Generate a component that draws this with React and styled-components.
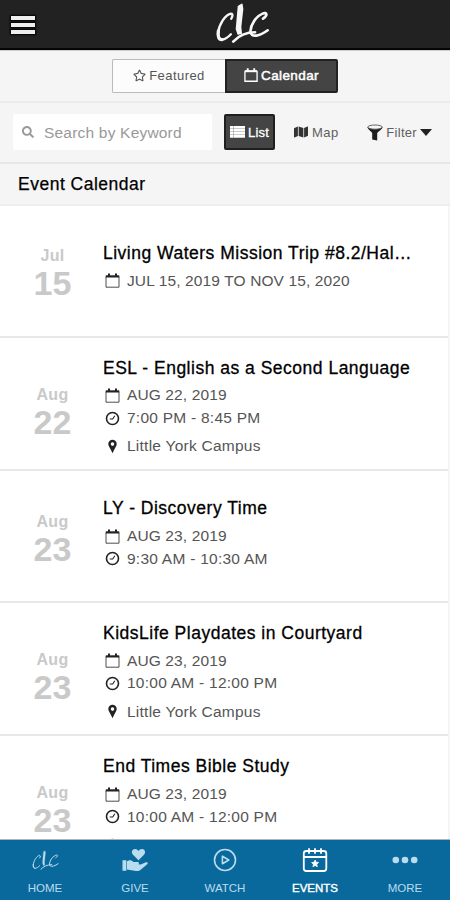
import React from 'react';
import styled, { createGlobalStyle, css } from 'styled-components';
import { FaMap, FaRegStar, FaSearch } from 'react-icons/fa';

const events = [
  {
    month: 'Jul',
    day: '15',
    title: 'Living Waters Mission Trip #8.2/Hal…',
    date: 'JUL 15, 2019 TO NOV 15, 2020',
  },
  {
    month: 'Aug',
    day: '22',
    title: 'ESL - English as a Second Language',
    date: 'AUG 22, 2019',
    time: '7:00 PM - 8:45 PM',
    place: 'Little York Campus',
  },
  {
    month: 'Aug',
    day: '23',
    title: 'LY - Discovery Time',
    date: 'AUG 23, 2019',
    time: '9:30 AM - 10:30 AM',
  },
  {
    month: 'Aug',
    day: '23',
    title: 'KidsLife Playdates in Courtyard',
    date: 'AUG 23, 2019',
    time: '10:00 AM - 12:00 PM',
    place: 'Little York Campus',
  },
  {
    month: 'Aug',
    day: '23',
    title: 'End Times Bible Study',
    date: 'AUG 23, 2019',
    time: '10:00 AM - 12:00 PM',
    place: 'Little York Campus',
  },
];

function Logo({ width, height, thin }) {
  return (
    <svg width={width} height={height} viewBox="0 0 160 120" fill="none" stroke="currentColor" strokeLinecap="round" strokeLinejoin="round">
      <path d="M46 47Q54 32 45 32C28 34 8 66 6 92C6 119 28 112 45 94" strokeWidth={thin ? 6 : 7} />
      <path d="M7 85Q4 111 18 110" strokeWidth={thin ? 6 : 10} />
      <path d="M68 10L78 4L80 18L74 72L76 91L67 93L62 78Z" fill="currentColor" strokeWidth={thin ? 1 : 5} />
      <path d="M52 116C68 99 88 88 118 88" strokeWidth={thin ? 6 : 8} />
      <path d="M142 47C158 36 153 27 142 31C120 40 105 65 104 84C104 108 134 98 156 82" strokeWidth={thin ? 6 : 8} />
    </svg>
  );
}

function CalendarIcon({ size = 15, bold }) {
  return (
    <svg width={size} height={size} viewBox="0 0 15 15" fill="none" stroke="currentColor">
      <path d="M1 3.5v10.7h13V3.5" strokeWidth={bold ? 1.4 : 0.8} />
      <path d="M.8 2.3h13.4v2.2H.8z" fill="currentColor" stroke="none" />
      <path d="M4 .4v3M11 .4v3" strokeWidth="2" />
    </svg>
  );
}

function ClockIcon() {
  return (
    <svg width="15" height="15" viewBox="0 0 15 15" fill="none" stroke="currentColor">
      <circle cx="7.5" cy="7.5" r="6" strokeWidth="1.6" />
      <path d="M4.7 8h3L9.8 4.8" strokeWidth="1.1" />
    </svg>
  );
}

function PinIcon() {
  return (
    <svg width="15" height="15" viewBox="0 0 15 15">
      <path
        d="M7.5.8a4.2 4.2 0 0 1 4.2 4.2c0 1.6-1 2.6-2.4 5.6L7.5 14.2l-1.8-3.6C4.3 7.6 3.3 6.6 3.3 5A4.2 4.2 0 0 1 7.5.8zm0 2.5a1.8 1.8 0 1 0 0 3.6 1.8 1.8 0 0 0 0-3.6z"
        fill="currentColor"
        fillRule="evenodd"
      />
    </svg>
  );
}

function GiveIcon() {
  return (
    <svg width="26" height="24" viewBox="0 0 26 24" fill="currentColor">
      <path d="M16.5 12.3L11 6.8C8.8 4.4 10.2 1 13 1c1.6 0 2.7.8 3.5 2 .8-1.2 1.9-2 3.5-2 2.8 0 4.2 3.4 2 5.8z" />
      <path d="M.5 12.2h3.9v10.6H.5zM5 13.2c2.7-1.4 4.5-1 6.5.7h3.7c2 0 2.2 1.6 1 2.4l2.6.2 5-2.2c1.7-.7 2.6 1 1.4 2l-6.2 5.2c-1.5 1.3-3.1 1.7-5 1.5L5 21.6z" />
    </svg>
  );
}

function TabCalendarIcon() {
  return (
    <svg width="26" height="26" viewBox="0 0 26 26" fill="none" stroke="currentColor" strokeWidth="1.8">
      <rect x="1.8" y="4" width="22.5" height="20" rx="2.5" />
      <path d="M1.8 10h22.5M7 1.2v5.5M13 1.2v5.5M19 1.2v5.5" />
      <path
        d="M13.1 13l1 2.3 2.5.2-1.9 1.7.6 2.5-2.2-1.3-2.2 1.3.6-2.5-1.9-1.7 2.5-.2z"
        fill="currentColor"
        strokeWidth=".8"
      />
    </svg>
  );
}

function ListIcon() {
  return (
    <svg width="15" height="12" viewBox="0 0 15 12" fill="currentColor">
      <path d="M0 0h15v12H0z" opacity=".45" />
      <path d="M0 0h3v2.4H0zM3.6 0H15v2.4H3.6zM0 3h3v2.4H0zM3.6 3H15v2.4H3.6zM0 6h3v2.4H0zM3.6 6H15v2.4H3.6zM0 9h3v2.6H0zM3.6 9H15v2.6H3.6z" />
    </svg>
  );
}

function FunnelIcon() {
  return (
    <svg width="16" height="17" viewBox="0 0 16 17">
      <path d="M.3 3.2C1.3 6 4.2 7.4 5.2 9v6.6l5 .8V9c1.2-1.6 4.5-3 5.5-5.8z" fill="currentColor" />
      <ellipse cx="8" cy="3.1" rx="7.2" ry="2.1" fill="#f5f5f5" stroke="#555" strokeWidth=".9" />
    </svg>
  );
}

function EventRow({ event }) {
  const lines = [event.date, event.time, event.place].filter(Boolean).length;
  return (
    <Row $lines={lines}>
      <DateBox $lines={lines}>
        <Month>{event.month}</Month>
        <Day>{event.day}</Day>
      </DateBox>
      <Info>
        <Title>{event.title}</Title>
        <Meta>
          <CalendarIcon />
          <span>{event.date}</span>
        </Meta>
        {event.time && (
          <Meta $wide>
            <ClockIcon />
            <span>{event.time}</span>
          </Meta>
        )}
        {event.place && (
          <Meta $wide $spaced>
            <PinIcon />
            <span>{event.place}</span>
          </Meta>
        )}
      </Info>
    </Row>
  );
}

function App() {
  return (
    <Screen>
      <GlobalStyle />
      <Header>
        <MenuButton aria-label="Menu">
          <span />
          <span />
          <span />
        </MenuButton>
        <Logo width={53} height={40} />
      </Header>

      <Segments>
        <Segment>
          <FaRegStar size={13} />
          <span>Featured</span>
        </Segment>
        <Segment $active>
          <CalendarIcon size={14} bold />
          <span>Calendar</span>
        </Segment>
      </Segments>

      <Toolbar>
        <SearchBox>
          <FaSearch size={12} />
          <span>Search by Keyword</span>
        </SearchBox>
        <ListButton>
          <ListIcon />
          <span>List</span>
        </ListButton>
        <MapButton>
          <FaMap size={14} />
          <span>Map</span>
        </MapButton>
        <FilterButton>
          <FunnelIcon />
          <span>Filter</span>
          <Caret />
        </FilterButton>
      </Toolbar>

      <SectionTitle>Event Calendar</SectionTitle>

      <EventList>
        {events.map((event) => (
          <EventRow key={event.title} event={event} />
        ))}
      </EventList>

      <TabBar>
        <Tab>
          <Logo width={27} height={20} thin />
          <span>HOME</span>
        </Tab>
        <Tab>
          <GiveIcon />
          <span>GIVE</span>
        </Tab>
        <Tab>
          <svg width="24" height="24" viewBox="0 0 24 24" fill="none" stroke="currentColor" strokeWidth="1.6">
            <circle cx="12" cy="12" r="10.5" />
            <path d="M9.4 8.2v7.6L15.8 12z" strokeLinejoin="round" />
          </svg>
          <span>WATCH</span>
        </Tab>
        <Tab $active>
          <TabCalendarIcon />
          <span>EVENTS</span>
        </Tab>
        <Tab>
          <svg width="26" height="8" viewBox="0 0 26 8" fill="currentColor">
            <circle cx="3.8" cy="4" r="3.3" />
            <circle cx="13" cy="4" r="3.3" />
            <circle cx="22.2" cy="4" r="3.3" />
          </svg>
          <span>MORE</span>
        </Tab>
      </TabBar>
    </Screen>
  );
}

const GlobalStyle = createGlobalStyle`
  * {
    box-sizing: border-box;
  }

  body {
    margin: 0;
    font-family: 'Liberation Sans', Arial, sans-serif;
  }

  svg {
    flex-shrink: 0;
  }
`;

const Screen = styled.div`
  display: flex;
  flex-direction: column;
  width: 450px;
  height: 900px;
  overflow: hidden;
  background-color: #f5f5f5;
`;

const Header = styled.header`
  display: grid;
  grid-template-columns: 1fr 53px 1fr;
  align-items: center;
  flex-shrink: 0;
  height: 50px;
  padding: 0 2px 2px 11px;
  background-color: #222;
  border-bottom: 2px solid #050505;
  color: #f7f7f7;

  > svg {
    margin-left: 26px;
    justify-self: center;
  }
`;

const MenuButton = styled.button`
  display: flex;
  flex-direction: column;
  gap: 3px;
  width: 24px;
  padding: 0;
  border: none;
  background: none;
  margin-top: 4px;

  span {
    height: 4px;
    background-color: #eee;
    box-shadow: 0 0 2px 1px #000;
  }
`;

const Segments = styled.div`
  display: flex;
  justify-content: center;
  flex-shrink: 0;
  height: 53px;
  padding-top: 8px;
  border-top: 1px solid #ccc;
  border-bottom: 2px solid #ebebeb;
`;

const Segment = styled.button`
  display: flex;
  align-items: center;
  justify-content: center;
  gap: 3px;
  width: 113px;
  height: 34px;
  padding: 0 0 2px;
  border: 1.5px solid #bbb;
  border-right: none;
  border-radius: 2px 0 0 2px;
  background-color: #fcfcfc;
  color: #555;
  font-family: inherit;
  font-size: 13px;
  letter-spacing: 0.45px;

  ${({ $active }) =>
    $active &&
    css`
      border: 2px solid #222;
      border-radius: 0 2px 2px 0;
      background-color: #444;
      color: #fff;
      font-size: 13.5px;
      letter-spacing: 0.4px;
      -webkit-text-stroke: 0.5px #fff;
    `}
`;

const Toolbar = styled.div`
  display: flex;
  align-items: center;
  flex-shrink: 0;
  height: 61px;
  padding: 0 18px 1px 13px;
  border-bottom: 2px solid #e7e7e7;
  font-size: 13px;
  color: #606060;
`;

const SearchBox = styled.div`
  display: flex;
  align-items: center;
  gap: 10px;
  width: 199px;
  height: 36px;
  padding: 2px 0 0 9px;
  border-radius: 2px;
  background-color: #fff;
  color: #999;
  font-size: 15.5px;
  letter-spacing: 0.2px;

  svg {
    margin-bottom: 3px;
  }
`;

const ListButton = styled.div`
  display: flex;
  align-items: center;
  justify-content: center;
  gap: 3px;
  width: 51px;
  height: 36px;
  margin-left: 12px;
  border: 2px solid #1f1f1f;
  border-radius: 2px;
  background-color: #444;
  color: #fff;
  letter-spacing: 0.2px;
  -webkit-text-stroke: 0.3px #fff;
`;

const MapButton = styled.div`
  display: flex;
  align-items: center;
  gap: 4px;
  margin-left: 19px;
  letter-spacing: 0.5px;

  svg {
    color: #333;
  }
`;

const FilterButton = styled.div`
  display: flex;
  align-items: center;
  gap: 3px;
  margin-left: auto;
  letter-spacing: 0.3px;

  svg {
    color: #1c1c1c;
  }
`;

const Caret = styled.i`
  border: 6px solid transparent;
  border-top: 7px solid #222;
  border-bottom: none;
`;

const SectionTitle = styled.h2`
  flex-shrink: 0;
  height: 42px;
  margin: 0;
  padding-left: 18px;
  border-bottom: 2px solid #eee;
  color: #000;
  font-size: 17.5px;
  font-weight: 400;
  line-height: 41px;
  letter-spacing: 0.5px;
  -webkit-text-stroke: 0.25px #000;
`;

const EventList = styled.div`
  flex: 1;
  min-height: 0;
  overflow: hidden;
  width: 448px;
  background-color: #fff;
`;

// rows are sized and offset by how many detail lines they hold
const rowHeight = { 1: 131.7, 2: 131.5, 3: 133.6 };
const titleTop = { 1: 36, 2: 26, 3: 19 };
const dateTop = { 1: 39, 2: 40, 3: 46 };

const Row = styled.article`
  display: flex;
  height: ${({ $lines }) => rowHeight[$lines]}px;
  padding-top: ${({ $lines }) => titleTop[$lines]}px;
  border-bottom: 2px solid #e8e8e8;
`;

const DateBox = styled.div`
  flex-shrink: 0;
  width: 103px;
  padding-left: 2px;
  margin-top: ${({ $lines }) => dateTop[$lines] - titleTop[$lines]}px;
  color: #c9c9c9;
  font-weight: 700;
  text-align: center;
`;

const Month = styled.div`
  font-size: 16px;
  line-height: 22px;
  letter-spacing: 0.3px;
`;

const Day = styled.div`
  font-size: 34px;
  line-height: 33px;
`;

const Info = styled.div`
  flex: 1;
  min-width: 0;
`;

const Title = styled.h3`
  margin: 0 0 5.4px;
  color: #000;
  font-size: 17.5px;
  font-weight: 400;
  line-height: 22px;
  letter-spacing: 0.5px;
  white-space: nowrap;
  -webkit-text-stroke: 0.3px #000;
`;

const Meta = styled.div`
  display: flex;
  align-items: center;
  gap: 7px;
  height: 22.8px;
  padding-left: 2px;
  margin-top: ${({ $spaced }) => ($spaced ? 5.4 : 0)}px;
  color: #555;
  font-size: 15.5px;
  letter-spacing: ${({ $wide }) => ($wide ? 0.25 : 0.12)}px;
  white-space: nowrap;

  svg {
    color: #222;
  }
`;

const TabBar = styled.nav`
  display: grid;
  grid-template-columns: repeat(5, 1fr);
  flex-shrink: 0;
  height: 61px;
  border-top: 1px solid #a9b4bb;
  background-color: #0a699c;
`;

const Tab = styled.a`
  display: grid;
  grid-template-rows: 39px 17px;
  place-items: center;
  color: ${({ $active }) => ($active ? '#fff' : '#b9dcee')};
  font-size: 11.5px;
  align-content: start;

  span {
    -webkit-text-stroke: ${({ $active }) => ($active ? '0.4px' : '0')};
  }
`;

export default App;
